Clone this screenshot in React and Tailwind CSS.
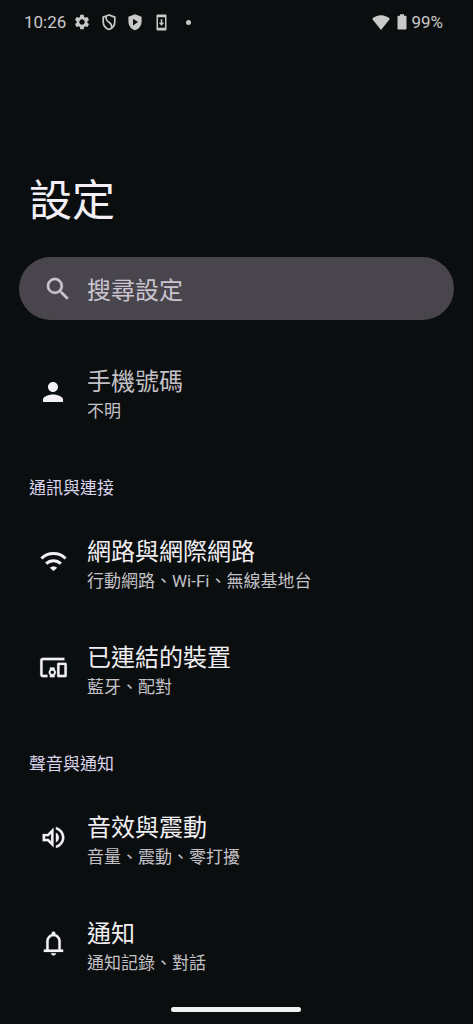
import React from "react";

const icons = {
  person: "M12 12c2.21 0 4-1.79 4-4s-1.79-4-4-4-4 1.79-4 4 1.79 4 4 4zm0 2c-2.67 0-8 1.34-8 4v2h16v-2c0-2.66-5.33-4-8-4z",
  devices:
    "M3 6h18V4H3c-1.1 0-2 .9-2 2v12c0 1.1.9 2 2 2h4v-2H3V6zm10 6H9v1.78c-.61.55-1 1.33-1 2.22s.39 1.67 1 2.22V20h4v-1.78c.61-.55 1-1.34 1-2.22s-.39-1.67-1-2.22V12zm-2 5.5c-.83 0-1.5-.67-1.5-1.5s.67-1.5 1.5-1.5 1.5.67 1.5 1.5-.67 1.5-1.5 1.5zM22 8h-6c-.5 0-1 .5-1 1v10c0 .5.5 1 1 1h6c.5 0 1-.5 1-1V9c0-.5-.5-1-1-1zm-1 10h-4v-8h4v8z",
  volume:
    "M3 9v6h4l5 5V4L7 9H3zm7-.17v6.34L7.83 13H5v-2h2.83L10 8.83zM16.5 12c0-1.77-1.02-3.29-2.5-4.03v8.05c1.48-.73 2.5-2.25 2.5-4.02zM14 3.23v2.06c2.89.86 5 3.54 5 6.71s-2.11 5.85-5 6.71v2.06c4.01-.91 7-4.49 7-8.77s-2.99-7.86-7-8.77z",
  bell: "M4 19v-2h2v-7q0-2.075 1.25-3.687T10.5 4.2v-.7q0-.625.438-1.062T12 2t1.063.438T13.5 3.5v.7q2 .5 3.25 2.113T18 10v7h2v2H4Zm8 3q-.825 0-1.412-.587T10 20h4q0 .825-.587 1.413T12 22Zm-4-5h8v-7q0-1.65-1.175-2.825T12 6 9.175 7.175 8 10v7Z",
  search:
    "M15.5 14h-.79l-.28-.27A6.471 6.471 0 0 0 16 9.5 6.5 6.5 0 1 0 9.5 16c1.61 0 3.09-.59 4.23-1.57l.27.28v.79l5 4.99L20.49 19l-4.99-5zm-6 0C7.01 14 5 11.99 5 9.5S7.01 5 9.5 5 14 7.01 14 9.5 11.99 14 9.5 14z",
  gear: "M19.14 12.94c.04-.3.06-.61.06-.94 0-.32-.02-.64-.07-.94l2.03-1.58a.49.49 0 0 0 .12-.61l-1.92-3.32a.488.488 0 0 0-.59-.22l-2.39.96c-.5-.38-1.03-.7-1.62-.94l-.36-2.54a.484.484 0 0 0-.48-.41h-3.84c-.24 0-.43.17-.47.41l-.36 2.54c-.59.24-1.13.57-1.62.94l-2.39-.96c-.22-.08-.47 0-.59.22L2.74 8.87c-.12.21-.08.47.12.61l2.03 1.58c-.05.3-.09.63-.09.94s.02.64.07.94l-2.03 1.58a.49.49 0 0 0-.12.61l1.92 3.32c.12.22.37.29.59.22l2.39-.96c.5.38 1.03.7 1.62.94l.36 2.54c.05.24.24.41.48.41h3.84c.24 0 .44-.17.47-.41l.36-2.54c.59-.24 1.13-.56 1.62-.94l2.39.96c.22.08.47 0 .59-.22l1.92-3.32c.12-.22.07-.47-.12-.61l-2.01-1.58zM12 15.6c-1.98 0-3.6-1.62-3.6-3.6s1.62-3.6 3.6-3.6 3.6 1.62 3.6 3.6-1.62 3.6-3.6 3.6z",
};

function Icon({ name, className }) {
  return (
    <svg viewBox="0 0 24 24" fill="currentColor" className={className}>
      <path d={icons[name]} />
    </svg>
  );
}

function WifiIcon({ className }) {
  return (
    <svg viewBox="0 0 24 24" fill="none" stroke="currentColor" strokeWidth="2.5" className={className}>
      <path d="M2 9.5a14.4 14.4 0 0 1 20 0" />
      <path d="M5.9 13.8a8.9 8.9 0 0 1 12.2 0" />
      <path d="M12 19.9 8.9 17.2a4.7 4.7 0 0 1 6.2 0Z" fill="currentColor" stroke="none" />
    </svg>
  );
}

function StatusBar() {
  return (
    <header className="flex h-11 items-center pl-6 pr-[30px] text-[17px] leading-none text-[#c9c9ca]">
      <span className="w-[43px]">10:26</span>
      <Icon name="gear" className="ml-[6px] size-[18px]" />
      <svg viewBox="0 0 14 17" className="ml-[11px] h-[17px] w-[14px]" fill="none" stroke="currentColor" strokeWidth="1.7">
        <path d="M7 1 1.2 3.2v4.3c0 3.7 2.4 6.9 5.8 8 3.4-1.1 5.8-4.3 5.8-8V3.2z" />
        <path d="M4.2 2.5c-.6 3.1.4 4.4 2.7 5.8 2.2 1.3 3.2 2.7 2.6 5.5" />
      </svg>
      <svg viewBox="0 0 14 17" className="ml-[12px] h-[17px] w-[14px]" fill="currentColor" fillRule="evenodd">
        <path d="M7 .2.4 2.7v4.8c0 4.1 2.8 7.8 6.6 8.8 3.8-1 6.6-4.7 6.6-8.8V2.7zM5 4.8 10 8l-5 3.4z" />
      </svg>
      <svg viewBox="0 0 11 17" className="ml-[14px] h-[17px] w-[11px]" fill="currentColor" fillRule="evenodd">
        <path d="M1.7.4h7.6c.7 0 1.2.5 1.2 1.2v13.8c0 .7-.5 1.2-1.2 1.2H1.7c-.7 0-1.2-.5-1.2-1.2V1.6C.5.9 1 .4 1.7.4zM2 3.2v10.6h7V3.2zM4.7 5.3h1.6v3.4h2L5.5 11.8 2.7 8.7h2z" />
      </svg>
      <span className="ml-[19px] size-[5px] rounded-full bg-current" />
      <svg viewBox="0 0 18 15" className="ml-auto h-[15px] w-[18px]" fill="currentColor">
        <path d="M9 15 .2 3.9C2.6 1.6 5.6.3 9 .3s6.4 1.3 8.8 3.6z" />
      </svg>
      <svg viewBox="0 0 10 16" className="ml-[7px] h-[16px] w-[10px]" fill="currentColor">
        <path d="M3 .3h4v1.5h1.5c.6 0 1 .4 1 1v11.7c0 .6-.4 1-1 1h-7c-.6 0-1-.4-1-1V2.8c0-.6.4-1 1-1H3z" />
      </svg>
      <span className="ml-[4px]">99%</span>
    </header>
  );
}

function Row({ icon, title, subtitle, titleClass = "text-[#f1eff2]" }) {
  return (
    <div className="flex h-[106px] items-center pl-[38px]">
      <div className="flex size-[30px] shrink-0 justify-center text-[#f4f1f6]">{icon}</div>
      <div className="ml-[19px] pt-[5px]">
        <div className={"text-[24px] leading-[34px] " + titleClass}>{title}</div>
        <div className="text-[17px] leading-[25px] text-[#c3c1c6]">{subtitle}</div>
      </div>
    </div>
  );
}

function Section({ children }) {
  return <h2 className="h-16 pl-[29px] pt-[31px] text-[17px] leading-[25px] text-[#dcd5ee]">{children}</h2>;
}

export default function App() {
  return (
    <div
      lang="zh-TW"
      className="flex h-[1024px] w-[473px] flex-col overflow-hidden bg-[#0b0e0f] font-['Roboto','Noto_Sans_CJK_TC',sans-serif]"
    >
      <StatusBar />
      <h1 className="mt-[125px] pl-[29px] text-[43px] leading-[64px] text-[#f4f0f7]">設定</h1>
      <div className="ml-[19px] mr-[19px] mt-[24px] flex h-[63px] shrink-0 items-center rounded-full bg-[#49454c] pl-6 text-[#cac4d0]">
        <Icon name="search" className="size-[30px] stroke-current stroke-[0.2]" />
        <span className="ml-[14px] pt-[6px] text-[24px] leading-[35px]">搜尋設定</span>
      </div>
      <main className="mt-[19px]">
        <Row
          icon={<Icon name="person" className="size-[30px]" />}
          title="手機號碼"
          subtitle="不明"
          titleClass="text-[#c3c1c6]"
        />
        <Section>通訊與連接</Section>
        <Row icon={<WifiIcon className="size-[29px]" />} title="網路與網際網路" subtitle="行動網路、Wi-Fi、無線基地台" />
        <Row
          icon={<Icon name="devices" className="size-[29px] stroke-current stroke-[0.15]" />}
          title="已連結的裝置"
          subtitle="藍牙、配對"
        />
        <Section>聲音與通知</Section>
        <Row
          icon={<Icon name="volume" className="size-[29px] stroke-current stroke-[0.15]" />}
          title="音效與震動"
          subtitle="音量、震動、零打擾"
        />
        <Row
          icon={<Icon name="bell" className="size-[29px] stroke-current stroke-[0.15]" />}
          title="通知"
          subtitle="通知記錄、對話"
        />
      </main>
      <div className="ml-[171px] mt-[10px] h-[5px] w-[130px] shrink-0 rounded-full bg-[#f2f2f2]" />
    </div>
  );
}
